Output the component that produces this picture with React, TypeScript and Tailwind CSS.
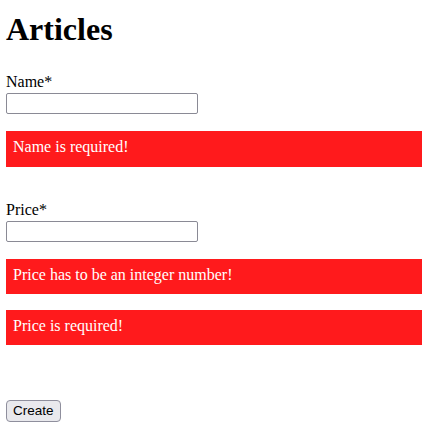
import React from "react";

export default function App() {
  const errors1 = ["Name is required!"];
  return (
    <div className="bg-white min-h-[435px] pl-[6px] pt-[11px] text-black" style={{ fontFamily: '"Liberation Serif", "Times New Roman", serif' }}>
      <h1 className="text-[32px] font-bold leading-[36px]">Articles</h1>
      <form className="flex flex-col items-start" onSubmit={(e) => e.preventDefault()}>
        <label className="mt-[26px] text-[16px] leading-[18px]">Name*</label>
        <input className="mt-[2px] h-[21px] w-[192px] border border-[#8a8a95] rounded-[2px] bg-white" />
        {errors1.map((e) => (
          <div key={e} className="mt-[17px] w-[416px] bg-[#ff1a1c] text-white text-[16px] leading-[18px] pt-[7px] pb-[11px] pl-[7px]">
            {e}
          </div>
        ))}
        <label className="mt-[34px] text-[16px] leading-[18px]">Price*</label>
        <input className="mt-[2px] h-[21px] w-[192px] border border-[#8a8a95] rounded-[2px] bg-white" />
        <div className="mt-[17px] w-[416px] bg-[#ff1a1c] text-white text-[16px] leading-[18px] pt-[7px] pb-[10px] pl-[7px]">
          Price has to be an integer number!
        </div>
        <div className="mt-[16px] w-[416px] bg-[#ff1a1c] text-white text-[16px] leading-[18px] pt-[7px] pb-[10px] pl-[7px]">
          Price is required!
        </div>
        <button
          type="submit"
          className="mt-[55px] h-[22px] px-[6px] border border-[#8f8f9d] rounded-[4px] bg-[#e9e9ed] text-[13.5px] leading-[18px] text-black"
          style={{ fontFamily: '"Liberation Sans", Arial, sans-serif' }}
        >
          Create
        </button>
      </form>
    </div>
  );
}
